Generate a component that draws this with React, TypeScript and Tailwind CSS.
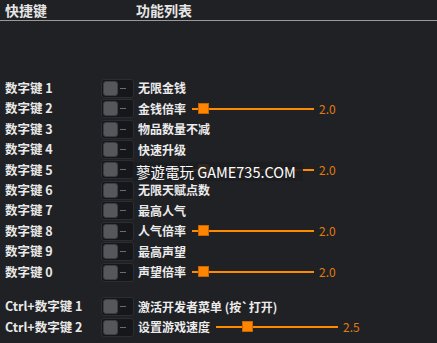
import React from "react";

type Row = {
  key: string;
  label: string;
  slider?: { start: number; width: number; knob: number; value: string };
};

const rows: Row[] = [
  { key: "数字键 1", label: "无限金钱" },
  { key: "数字键 2", label: "金钱倍率", slider: { start: 192, width: 122, knob: 203, value: "2.0" } },
  { key: "数字键 3", label: "物品数量不减" },
  { key: "数字键 4", label: "快速升级" },
  { key: "数字键 5", label: "", slider: { start: 192, width: 122, knob: 203, value: "2.0" } },
  { key: "数字键 6", label: "无限天赋点数" },
  { key: "数字键 7", label: "最高人气" },
  { key: "数字键 8", label: "人气倍率", slider: { start: 192, width: 122, knob: 203, value: "2.0" } },
  { key: "数字键 9", label: "最高声望" },
  { key: "数字键 0", label: "声望倍率", slider: { start: 192, width: 122, knob: 203, value: "2.0" } },
];

const ctrlRows: Row[] = [
  { key: "Ctrl+数字键 1", label: "激活开发者菜单 (按`打开)" },
  { key: "Ctrl+数字键 2", label: "设置游戏速度", slider: { start: 216, width: 122, knob: 247, value: "2.5" } },
];

function Toggle() {
  return (
    <div className="relative w-[33px] h-[19px] rounded-[3px] bg-[#16171b] border border-[#2c2d32] flex items-center">
      <div className="ml-[1px] w-[15px] h-[15px] rounded-[3px] bg-[#55575b] border border-[#3d3e43]" />
      <div className="ml-[2px] w-[6px] h-px bg-[#6a6b70]" />
    </div>
  );
}

function Slider({ s }: { s: NonNullable<Row["slider"]> }) {
  return (
    <div className="absolute top-0 h-full flex items-center" style={{ left: s.start }}>
      <div className="relative h-[2px] bg-[#ff8a00]" style={{ width: s.width }}>
        <div
          className="absolute top-[-5px] w-[11px] h-[11px] bg-[#ff8400] border border-[#c76500]"
          style={{ left: s.knob - s.start - 5 }}
        />
      </div>
      <span className="ml-[5px] text-[12px] text-[#e07b0c]">{s.value}</span>
    </div>
  );
}

function RowView({ r }: { r: Row }) {
  return (
    <div className="relative flex items-center h-[20.45px]">
      <div className="w-[101px] pl-[5px] font-bold text-[12.5px] text-[#e9e9e9]">{r.key}</div>
      <Toggle />
      <div className="ml-[4px] font-bold text-[12px] text-[#ececec]">{r.label}</div>
      {r.slider && <Slider s={r.slider} />}
    </div>
  );
}

export default function App() {
  return (
    <div
      className="w-[437px] h-[343px] bg-[#202124] overflow-hidden relative"
      style={{ fontFamily: '"Noto Sans CJK SC", "Noto Sans", sans-serif' }}
    >
      <div className="flex items-center h-[20px] font-bold text-[14px] text-[#e6e6e6]">
        <span className="pl-[5px] w-[136px]">快捷键</span>
        <span>功能列表</span>
      </div>
      <div className="h-px bg-[#9a9a9a]" />
      <div className="mt-[57px] flex flex-col">
        {rows.map((r) => (
          <RowView key={r.key} r={r} />
        ))}
      </div>
      <div className="mt-[14px] flex flex-col">
        {ctrlRows.map((r) => (
          <RowView key={r.key} r={r} />
        ))}
      </div>
      <div className="absolute left-[133px] top-[162px] w-[170px] h-[19px] bg-[#1c1d20]/90 flex items-center pl-[3px] text-[14.5px] text-white">
        蓼遊電玩 GAME735.COM
      </div>
    </div>
  );
}
